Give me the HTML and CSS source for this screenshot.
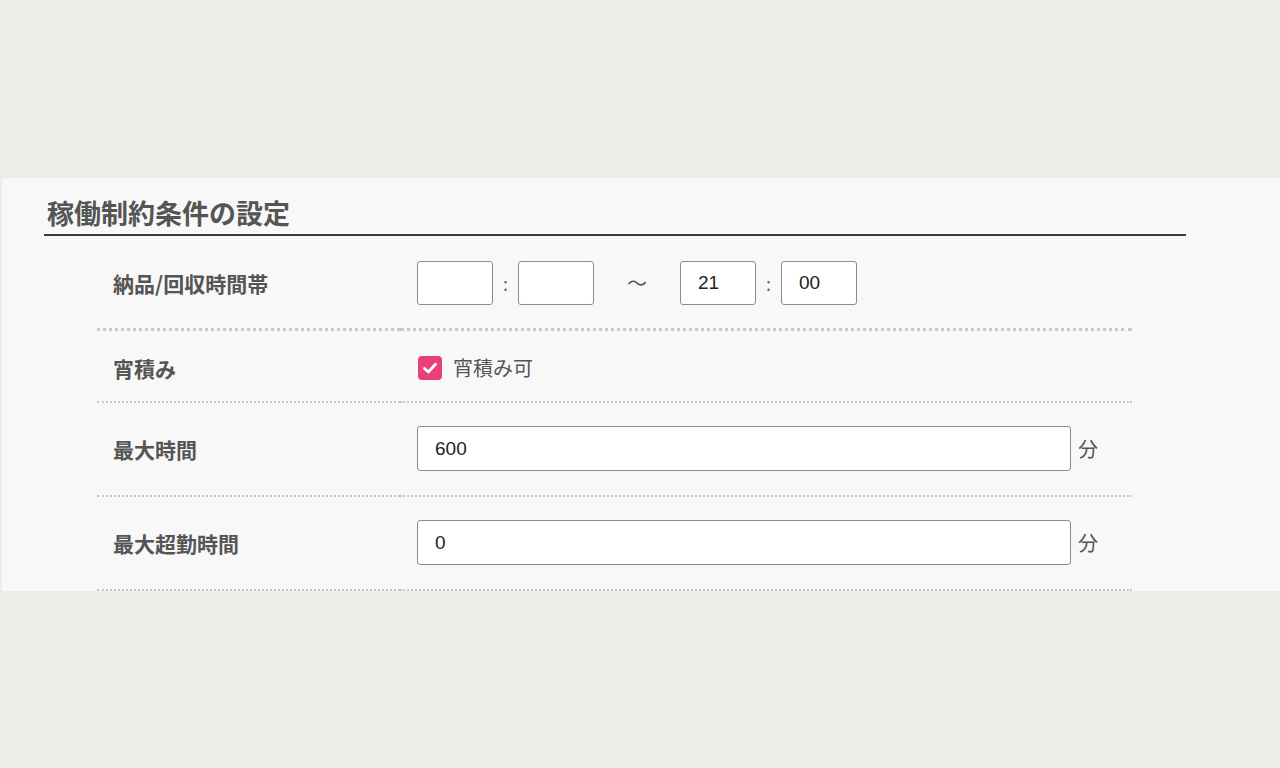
FILE: index.html
```html
<!DOCTYPE html>
<html lang="ja">
<head>
    <meta charset="UTF-8">
    <title>稼働制約条件の設定</title>
    <link rel="stylesheet" href="styles.css">
</head>
<body>
    <div class="panel">
        <h2 class="panel-title">稼働制約条件の設定</h2>
        <table class="form-table">
            <tr class="row-first">
                <th>納品/回収時間帯</th>
                <td>
                    <div class="time-range">
                        <input type="text" class="time-input" value="">
                        <span class="colon">:</span>
                        <input type="text" class="time-input" value="">
                        <span class="tilde">～</span>
                        <input type="text" class="time-input" value="21">
                        <span class="colon">:</span>
                        <input type="text" class="time-input" value="00">
                    </div>
                </td>
            </tr>
            <tr class="row-check">
                <th>宵積み</th>
                <td>
                    <label class="check">
                        <span class="check-box">
                            <svg width="16" height="16" viewBox="0 0 16 16"><path d="M2.5 8.5 L6.3 12 L13.5 4.2" fill="none" stroke="#fff" stroke-width="2.8" stroke-linecap="round" stroke-linejoin="round"/></svg>
                        </span>
                        <span>宵積み可</span>
                    </label>
                </td>
            </tr>
            <tr>
                <th>最大時間</th>
                <td>
                    <div class="with-unit">
                        <input type="text" class="wide-input" value="600">
                        <span class="unit">分</span>
                    </div>
                </td>
            </tr>
            <tr>
                <th>最大超勤時間</th>
                <td>
                    <div class="with-unit">
                        <input type="text" class="wide-input" value="0">
                        <span class="unit">分</span>
                    </div>
                </td>
            </tr>
        </table>
    </div>
</body>
</html>
```

FILE: styles.css
```css
body {
    margin: 0;
    background: #edece8;
    font-family: "Noto Sans CJK JP", "Liberation Sans", sans-serif;
    color: #555;
}
.panel {
    margin: 178px 0 0 2px;
    height: 413px;
    background: #f8f8f8;
    overflow: hidden;
}
.panel-title {
    margin: 16px 94px 0 42px;
    padding: 0 0 2px 3px;
    font-size: 27px;
    line-height: 38px;
    font-weight: bold;
    color: #555;
    border-bottom: 2px solid #3a3a3a;
}
.form-table {
    margin-left: 95px;
    width: 1035px;
    border-collapse: collapse;
}
.form-table th,
.form-table td {
    padding: 23px 0 24px 16px;
    border-bottom: 2px dotted #c8c8c8;
    text-align: left;
    vertical-align: middle;
    line-height: 24px;
}
.form-table th {
    width: 287px;
    font-size: 21px;
    font-weight: bold;
    color: #555;
}
.form-table td {
    padding-left: 17px;
}
.form-table .row-first th,
.form-table .row-first td {
    padding-top: 25px;
    padding-bottom: 23px;
    border-bottom: 3px dotted #c8c8c8;
}
.form-table .row-check th,
.form-table .row-check td {
    padding-top: 25px;
    padding-bottom: 21px;
}
input {
    box-sizing: border-box;
    height: 45px;
    border: 1px solid #8c8c8c;
    border-radius: 3px;
    background: #fff;
    font-family: "Liberation Sans", sans-serif;
    font-size: 19px;
    color: #222;
    padding: 0 17px;
    margin: 0;
}
.row-first input {
    height: 44px;
}
.time-range {
    display: flex;
    align-items: center;
}
.time-input {
    width: 76px;
}
.colon {
    width: 25px;
    text-align: center;
    font-size: 18px;
    color: #666;
}
.tilde {
    width: 86px;
    text-align: center;
    font-size: 20px;
    color: #555;
}
.check {
    display: flex;
    align-items: center;
    gap: 11px;
    font-size: 20px;
    color: #555;
}
.check-box {
    width: 24px;
    height: 24px;
    margin-left: 1px;
    border-radius: 4px;
    background: #e8417a;
    display: flex;
    align-items: center;
    justify-content: center;
}
.with-unit {
    display: flex;
    align-items: center;
}
.wide-input {
    width: 654px;
}
.unit {
    margin-left: 7px;
    font-size: 20px;
    color: #555;
}
```
